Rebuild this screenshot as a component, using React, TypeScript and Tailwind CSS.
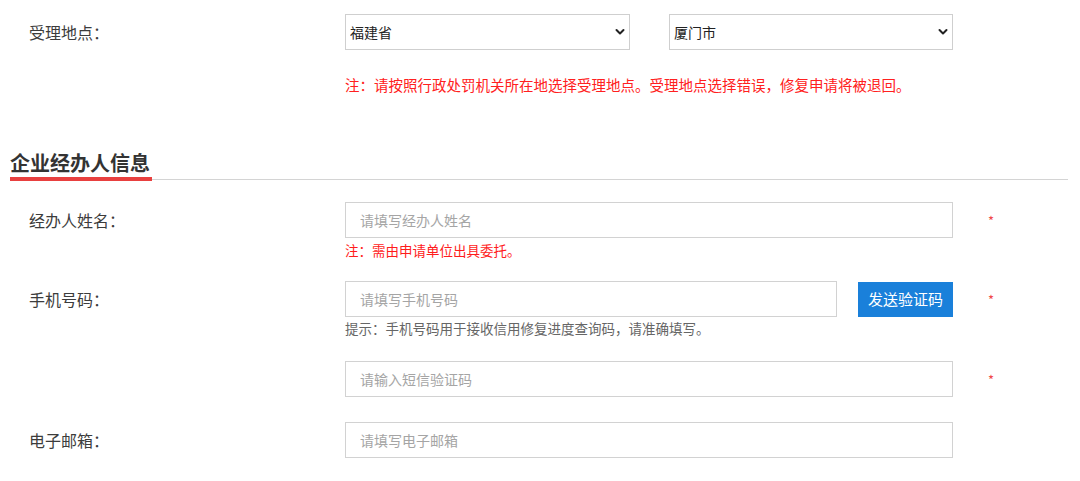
import type { ReactNode } from "react";

const FONT = "font-['Noto_Sans_CJK_SC','Noto_Sans',sans-serif]";

function Chevron() {
  return (
    <svg
      className="pointer-events-none absolute right-[5px] top-1/2 -translate-y-1/2"
      width="10"
      height="7"
      viewBox="0 0 10 7"
      fill="none"
    >
      <path d="M1.5 1.5 L5 5 L8.5 1.5" stroke="#222" strokeWidth="2" strokeLinecap="round" strokeLinejoin="round" />
    </svg>
  );
}

function Select({ value, width }: { value: string; width: string }) {
  return (
    <div className={`relative h-[36px] ${width}`}>
      <select
        defaultValue={value}
        className="h-full w-full appearance-none border border-[#cfcfcf] bg-white pl-[4px] pr-6 text-[14px] leading-[34px] text-[#222] outline-none"
      >
        <option value={value}>{value}</option>
      </select>
      <Chevron />
    </div>
  );
}

function TextInput({ placeholder, width = "w-[608px]" }: { placeholder: string; width?: string }) {
  return (
    <input
      placeholder={placeholder}
      className={`h-[36px] ${width} border border-[#d2d2d2] bg-white px-[14px] text-[14px] text-[#333] outline-none placeholder:text-[#a5a5a5]`}
    />
  );
}

function Row({ label, star, children }: { label?: string; star?: boolean; children: ReactNode }) {
  return (
    <div className="flex items-start">
      <div className="flex h-[36px] w-[345px] shrink-0 items-center pl-[29px] text-[16px] text-[#3c3c3c]">
        {label}
      </div>
      <div className="flex w-[608px] shrink-0 flex-col">{children}</div>
      {star && (
        <div className="flex h-[36px] items-center pl-[35px] text-[13px] leading-none text-[#f04848]">*</div>
      )}
    </div>
  );
}

export default function App() {
  return (
    <div className={`h-[481px] w-[1080px] overflow-hidden bg-white ${FONT}`}>
      {/* 受理地点 */}
      <div className="mt-[14px] flex items-center">
        <div className="w-[345px] shrink-0 pl-[29px] text-[16px] leading-[36px] text-[#3c3c3c]">受理地点：</div>
        <Select value="福建省" width="w-[285px]" />
        <div className="w-[39px]" />
        <Select value="厦门市" width="w-[284px]" />
      </div>
      <p className="mt-[25px] pl-[345px] text-[14.5px] leading-[20px] text-[#ff2020]">
        注：请按照行政处罚机关所在地选择受理地点。受理地点选择错误，修复申请将被退回。
      </p>

      {/* 企业经办人信息 */}
      <div className="mt-[56px] flex w-[1068px] items-end pl-[10px]">
        <h2 className="border-b-[4px] border-[#e8403f] pb-[2px] pr-[2px] text-[20px] font-bold leading-[24px] text-[#333]">
          企业经办人信息
        </h2>
        <div className="mb-[1px] flex-1 border-b border-[#d4d4d4]" />
      </div>

      <div className="mt-[21px] flex flex-col">
        <Row label="经办人姓名：" star>
          <TextInput placeholder="请填写经办人姓名" />
          <p className="mt-[3px] text-[13.5px] leading-[18px] text-[#ff1c1c]">注：需由申请单位出具委托。</p>
        </Row>

        <div className="mt-[22px]">
          <Row label="手机号码：" star>
            <div className="flex items-center justify-between">
              <TextInput placeholder="请填写手机号码" width="w-[492px]" />
              <button className="h-[35px] w-[95px] bg-[#1a80da] text-[15px] text-white">发送验证码</button>
            </div>
            <p className="mt-[2px] text-[13.5px] leading-[18px] text-[#666]">
              提示：手机号码用于接收信用修复进度查询码，请准确填写。
            </p>
          </Row>
        </div>

        <div className="mt-[24px]">
          <Row star>
            <TextInput placeholder="请输入短信验证码" />
          </Row>
        </div>

        <div className="mt-[25px]">
          <Row label="电子邮箱：">
            <TextInput placeholder="请填写电子邮箱" />
          </Row>
        </div>
      </div>
    </div>
  );
}
